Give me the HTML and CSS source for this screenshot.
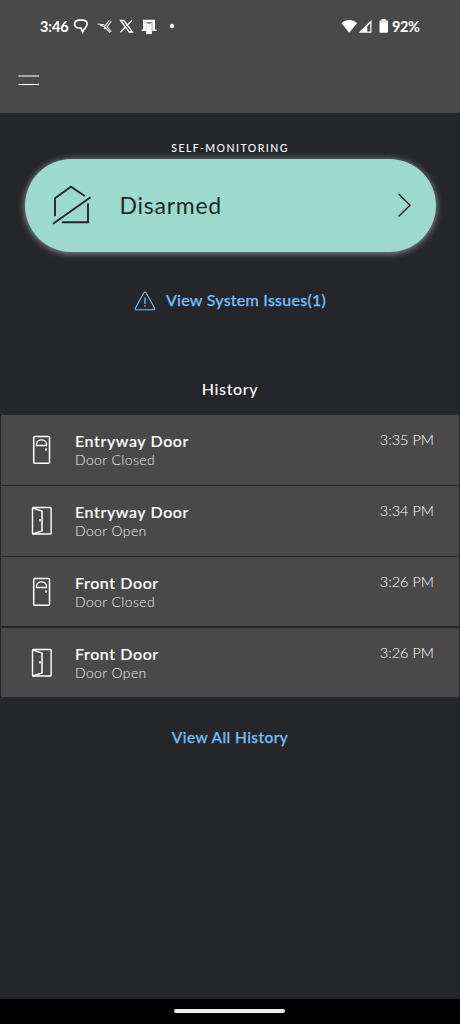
FILE: index.html
```html
<!DOCTYPE html>
<html lang="en">
<head>
<meta charset="utf-8">
<title>Home security</title>
<link rel="stylesheet" href="styles.css">
</head>
<body>
<svg class="sprite" aria-hidden="true">
  <symbol id="door-closed" viewBox="0 0 22 30">
    <rect x="3.700" y="1.500" width="15.800" height="26.800" rx="1" stroke-width="1.5"/>
    <path d="M6.500 10.500V9.300C6.500 6.600 8.800 4.800 11.500 4.800S16.500 6.600 16.500 9.300v1.200Z" stroke-width="1.300"/>
    <path d="M16 13.300v2.500" stroke-width="1.500"/>
  </symbol>
  <symbol id="door-open" viewBox="0 0 22 30">
    <rect x="2.500" y="1.500" width="18.600" height="26.500" rx=".8" stroke-width="1.4"/>
    <path d="M2.700 2l9.300 3v20L2.700 28" stroke-width="1.5"/>
    <path d="M10 13v2.600" stroke-width="1.5"/>
  </symbol>
</svg>
<div class="screen">
  <header class="top">
    <div class="status">
      <span class="clock">3:46</span>
      <svg class="status-left" width="104" height="20" viewBox="0 0 104 20">
        <path d="M6.500 4.200h3.200c2.700 0 4.400 1.600 4.400 3.900 0 3.400-3.400 4.500-4.500 7.900l-1.600-4H5.800c-2.600 0-4.200-1.600-4.200-3.900s1.900-3.900 4.900-3.900Z" fill="none" stroke="#fff" stroke-width="1.700"/>
        <path d="M24.700 8l6.800.9M27 9.300l4.500 1.500v2.400M36.300 4.300L31.500 10.600l5.400 6M38.300 5.200L34.200 10.700l4 5.200" fill="none" stroke="#e6e6e6" stroke-width="1.200"/>
        <path d="M47.500 4.500h3.400l8.600 11.500h-3.400Z" fill="none" stroke="#fff" stroke-width="1.3"/>
        <path d="M59 4.100l-5.300 5.800M52.400 11l-4.900 5.400" stroke="#fff" stroke-width="1.4"/>
        <path d="M70 3.800h12v9.600h1.700v1.600h-4.400V6.200h-6.100V15h-4.500v-1.600H70Z" fill="#fff"/>
        <path d="M73.200 6.900h5.600v11.200h-5.600Z" fill="#fff"/>
        <path d="M74.700 6.900h2.600v1h-2.600Z" fill="#777"/>
        <circle cx="99" cy="10" r="2.200" fill="#fff"/>
      </svg>
      <svg class="status-right" width="48" height="20" viewBox="0 0 48 20">
        <path d="M.5 7.200C4.800 2.800 11.700 2.800 16 7.200L8.200 16.800Z" fill="#fff"/>
        <path d="M17.500 16.800L30.500 4v12.800Z" fill="#fff"/>
        <path d="M26.300 10.200l3-3v8.400h-3Z" fill="#494949"/>
        <path d="M40.500 3h4v1.500H46q1 0 1 1v10.300q0 1-1 1h-6.500q-1 0-1-1V5.500q0-1 1-1h1Z" fill="#fff"/>
        <path d="M39.500 5.300H46v1.200h-6.500Z" fill="#ccc"/>
      </svg>
      <span class="battery">92%</span>
    </div>
    <svg class="menu" width="22" height="14" viewBox="0 0 22 14" stroke="#fff">
      <path d="M0.400 2h20.600" stroke-width="1.200" opacity=".9"/><path d="M0.400 10.500h20.600" stroke-width="1.100"/>
    </svg>
  </header>
  <main class="content">
    <div class="mode">SELF-MONITORING</div>
    <button class="pill">
      <svg class="house" width="42" height="42" viewBox="0 0 42 42" fill="none" stroke="#25262a" stroke-width="1.9">
        <path d="M4 32.200V14.200L20 2.700 33.700 12"/><path d="M2 39.800L39.600 13.300"/><path d="M37 19.400v18.800H10.800"/>
      </svg>
      <span class="pill-text">Disarmed</span>
      <svg class="chevron" width="15" height="26" viewBox="0 0 15 26" fill="none" stroke="#25262a" stroke-width="1.4"><path d="M1.5 1.800L13 13.200 1.500 24.600"/></svg>
    </button>
    <a class="issues">
      <svg width="22" height="20" viewBox="0 0 22 20" fill="none" stroke="#73bff8" stroke-width="1.1">
        <path d="M9.900 1.800Q11 .2 12.100 1.800L20.600 17q.6 1.800-1.200 1.800H2.600Q.8 18.800 1.400 17Z"/><path d="M11 6.500v6.500M11 14.300v1.500" stroke-width="1.3"/>
      </svg>
      <span class="issues-text">View System Issues(1)</span>
    </a>
    <h2 class="history">History</h2>
    <ul class="list">
      <li class="row"><svg class="door"><use href="#door-closed"/></svg><div class="info"><span class="name">Entryway Door</span><span class="state">Door Closed</span></div><span class="time">3:35 PM</span></li>
      <li class="row"><svg class="door"><use href="#door-open"/></svg><div class="info"><span class="name">Entryway Door</span><span class="state">Door Open</span></div><span class="time">3:34 PM</span></li>
      <li class="row"><svg class="door"><use href="#door-closed"/></svg><div class="info"><span class="name">Front Door</span><span class="state">Door Closed</span></div><span class="time">3:26 PM</span></li>
      <li class="row"><svg class="door"><use href="#door-open"/></svg><div class="info"><span class="name">Front Door</span><span class="state">Door Open</span></div><span class="time">3:26 PM</span></li>
    </ul>
    <a class="all">View All History</a>
  </main>
  <footer class="nav"><span class="handle"></span></footer>
</div>
</body>
</html>
```
FILE: styles.css
```css
* { box-sizing: border-box; }
body { margin: 0; background: #25262a; color: #fff; font-family: Lato, "Open Sans", sans-serif; }
.sprite { display: none; }
.screen { width: 460px; height: 1024px; display: flex; flex-direction: column; overflow: hidden; }
.top { height: 113px; background: #494949; flex: none; padding-top: 16px; }
.status { display: flex; align-items: center; height: 20px; padding-left: 40px; }
.clock, .battery { font-size: 14.5px; line-height: 20px; font-weight: 700; white-space: nowrap; margin-top: 1px; }
.clock { width: 32px; letter-spacing: -.1px; }
.status-left { flex: none; margin-left: 1px; }
.status-right { margin-left: 164px; flex: none; }
.battery { margin-left: 3px; letter-spacing: -.4px; }
.menu { display: block; margin: 38px 0 0 18px; }
.content { flex: 1; display: flex; flex-direction: column; align-items: center; }
.mode { margin-top: 28px; height: 14px; line-height: 14px; font-size: 10.5px; letter-spacing: 1.45px; font-weight: 500; }
.pill { margin: 4px 0 0; width: 411px; height: 93px; flex: none; border: 0; border-radius: 47px; background: #9bdacd; color: #25262a; box-shadow: 0 1px 6px 1px rgba(255,255,255,.42); display: flex; align-items: center; padding: 0 24px 0 26px; font-family: inherit; }
.house { flex: none; margin-top: -1px; }
.pill-text { font-size: 23px; line-height: 30px; margin: -2px 0 0 27px; letter-spacing: .75px; }
.chevron { margin: -2px 0 0 auto; }
.issues { display: flex; align-items: center; gap: 10px; height: 24px; margin-top: 37px; color: #73bff8; }
.issues-text { font-size: 16px; line-height: 20px; margin-top: -2px; font-weight: 500; letter-spacing: .25px; -webkit-text-stroke: .25px; }
.history { margin: 64px 0 0; height: 24px; line-height: 24px; font-size: 16px; font-weight: 500; letter-spacing: .65px; }
.list { list-style: none; margin: 14px 0 0; padding: 0; width: 458px; display: flex; flex-direction: column; gap: 1px; }
.row { height: 69.8px; background: #494949; display: flex; align-items: flex-start; padding: 0 25px 0 29px; }
.row:last-child { margin-top: .2px; }
.door { width: 22px; height: 30px; margin-top: 20px; fill: none; stroke: #fff; flex: none; }
.info { display: flex; flex-direction: column; margin: 16px 0 0 23px; }
.name { font-size: 16px; line-height: 20px; font-weight: 500; letter-spacing: .6px; -webkit-text-stroke: .15px; }
.state { font-size: 14px; line-height: 18px; color: #eee; letter-spacing: .38px; font-weight: 300; }
.time { margin: 16px 0 0 auto; font-size: 14.5px; line-height: 18px; font-weight: 300; }
.all { margin-top: 28px; height: 24px; line-height: 24px; font-size: 15.5px; font-weight: 500; color: #73bff8; letter-spacing: .4px; -webkit-text-stroke: .25px; }
.nav { height: 25px; background: #000; flex: none; display: flex; justify-content: center; }
.handle { width: 111px; height: 4px; border-radius: 2px; background: #eee; margin: 10px 1px 0 0; }
```
